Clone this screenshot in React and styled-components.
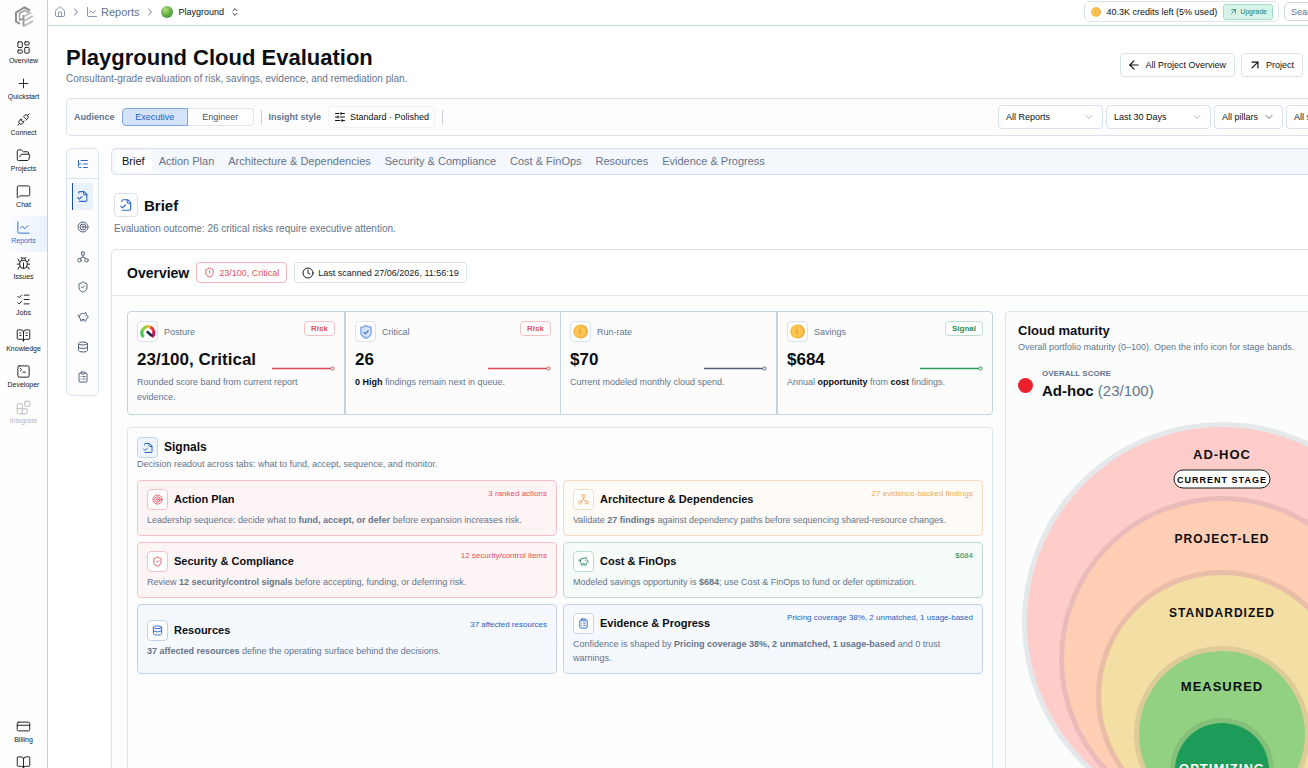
import React from "react";
import styled, { createGlobalStyle, css } from "styled-components";
import {
  ArrowLeft,
  ArrowUpRight,
  Blocks,
  BookOpen,
  BookOpenText,
  Bug,
  ChartLine,
  ChevronDown,
  ChevronRight,
  ChevronsUpDown,
  ClipboardList,
  Clock,
  CreditCard,
  Database,
  FolderOpen,
  House,
  LayoutDashboard,
  ListChecks,
  ListTree,
  MessageSquare,
  PiggyBank,
  Plus,
  ShieldAlert,
  ShieldCheck,
  SlidersHorizontal,
  SquareTerminal,
  Target,
} from "lucide-react";
import { TbPlugConnected } from "react-icons/tb";

const GlobalStyle = createGlobalStyle`
  * {
    box-sizing: border-box;
  }
  body {
    margin: 0;
    overflow-x: hidden;
    background: #ffffff;
    color: #0b0f14;
    font-family: "Liberation Sans", Arial, sans-serif;
    font-size: 9px;
  }
  button, input, select {
    font-family: inherit;
    color: inherit;
  }
  h1, h2, h3, p {
    margin: 0;
  }
  a {
    color: inherit;
    text-decoration: none;
  }
`;

const tones = {
  red: { text: "#e0525c", line: "#f3c0c4", bg: "#fdf5f5" },
  amber: { text: "#efab5c", line: "#f5dcc0", bg: "#fefaf5" },
  green: { text: "#1f8a57", line: "#bcdccf", bg: "#f4fbf9" },
  blue: { text: "#2563c4", line: "#c3d3ea", bg: "#f5f8fd" },
  plain: { text: "#2f6bcb", line: "#d9e2ec", bg: "#ffffff" },
};

/* ---------- drawings ---------- */

const FileCheck = ({ size = 14 }) => (
  <svg width={size} height={size} viewBox="0 0 24 24" fill="none" stroke="currentColor" strokeWidth="2" strokeLinecap="round" strokeLinejoin="round">
    <path d="M5 6V5a2 2 0 0 1 2-2h8l5 5v11a2 2 0 0 1-2 2H6" />
    <path d="M14 3v4a2 2 0 0 0 2 2h4" />
    <path d="m3 14 3 3 5-5" />
  </svg>
);

const Hierarchy = ({ size = 12 }) => (
  <svg width={size} height={size} viewBox="0 0 24 24" fill="none" stroke="currentColor" strokeWidth="2" strokeLinecap="round" strokeLinejoin="round">
    <rect x="9" y="2" width="6" height="6" rx="1" />
    <circle cx="5" cy="18.500" r="3.500" />
    <circle cx="19" cy="18.500" r="3.500" />
    <path d="M12 8v4M6 15l6-3 6 3" />
  </svg>
);

const Logo = () => (
  <svg width="20" height="22" viewBox="0 0 20 22" fill="none">
    <path d="M16 4.500 10.500 1.500 2 6.500V15.500l4 2.500" stroke="#8d8d8d" strokeWidth="2" />
    <path d="M15 6.500 10.500 4.500 5.500 7.500v6" stroke="#a0a0a0" strokeWidth="1.500" />
    <path d="M9.500 9v11.500" stroke="#9b9b9b" strokeWidth="2" />
    <path d="m10 10.500 7-4M10 15l9-5M10 20l9-5" stroke="#bcbcbc" strokeWidth="2" />
    <path d="m5 14.500 4-2" stroke="#9b9b9b" strokeWidth="1.500" />
  </svg>
);

const Coin = ({ size = 15 }) => (
  <svg width={size} height={size} viewBox="0 0 14 14">
    <circle cx="7.500" cy="7" r="6.500" fill="#d9a95a" />
    <circle cx="6.500" cy="7" r="6.300" fill="#f9bd3f" />
    <circle cx="6.500" cy="7" r="4.600" fill="#fbc653" />
    <path d="M6.500 4v6M8 5.500c-.6-.8-3-.8-3 .4s3 .8 3 2-2.400 1.200-3 .4" stroke="#e5a736" strokeWidth=".7" fill="none" />
  </svg>
);

const Gauge = () => (
  <svg width="16" height="16" viewBox="0 0 16 16" fill="none" strokeWidth="3">
    <path d="M3.600 13A6 6 0 0 1 2.500 6" stroke="#3fce4b" />
    <path d="M2.500 6.500A6 6 0 0 1 7 2.600" stroke="#8bd03c" />
    <path d="M6.500 2.700A6 6 0 0 1 11 3.500" stroke="#f4b63a" />
    <path d="M10.500 3.200A6 6 0 0 1 13.700 7.500" stroke="#e23b3b" />
    <path d="M13.600 7A6 6 0 0 1 12 13" stroke="#c2185b" />
    <path d="m7.500 8 4 3.500" stroke="#1b2430" strokeWidth="2.400" strokeLinecap="round" />
  </svg>
);

const BlueShield = () => (
  <svg width="14" height="16" viewBox="0 0 14 16">
    <path d="M7 .8 13 3v5c0 3.500-2.500 6-6 7.200C3.500 14 1 11.500 1 8V3z" fill="#8fb3ee" />
    <path d="M7 2.800 11.300 4.300v3.800c0 2.500-1.800 4.300-4.300 5.200-2.500-.9-4.300-2.700-4.300-5.200V4.300z" fill="#d4e4fb" />
    <path d="m4.800 8 1.700 1.700L9.500 6.500" stroke="#5f7fb8" strokeWidth="1.500" fill="none" />
  </svg>
);

const Spark = ({ color }) => (
  <svg width="64" height="6" viewBox="0 0 64 6" fill="none" stroke={color}>
    <path d="M1 3.500h59" strokeWidth="1.300" />
    <circle cx="61.500" cy="3.500" r="1.600" fill="#fff" />
  </svg>
);

const rings = [
  { label: "AD-HOC", r: 200, fill: "#ffcdc9", y: 37, size: 13 },
  { label: "PROJECT-LED", r: 163, fill: "#ffceb4", y: 121, size: 12 },
  { label: "STANDARDIZED", r: 126, fill: "#f3dea3", y: 195, size: 12 },
  { label: "MEASURED", r: 88, fill: "#92d182", y: 269, size: 13 },
  { label: "OPTIMIZING", r: 52, fill: "#1c9c58", y: 351, size: 13, color: "#ffffff" },
];

const MaturityChart = () => (
  <svg width="400" height="400" viewBox="0 0 400 400" role="img" aria-label="Maturity stages">
    {rings.map((ring) => (
      <g key={ring.label}>
        <circle cx="200" cy={400 - ring.r} r={ring.r - 5} fill={ring.fill} />
        <circle cx="200" cy={400 - ring.r} r={ring.r - 2.5} fill="none" stroke="#0f172a" strokeOpacity=".09" strokeWidth="5" />
      </g>
    ))}
    <rect x="152" y="48" width="96" height="18" rx="9" fill="#ffffff" stroke="#15181c" />
    <RingText x="200" y="61" $size={9}>CURRENT STAGE</RingText>
    {rings.map((ring) => (
      <RingText key={ring.label} x="200" y={ring.y} $size={ring.size} fill={ring.color || "#0b0f14"}>
        {ring.label}
      </RingText>
    ))}
  </svg>
);

/* ---------- data ---------- */

const navItems = [
  { label: "Overview", icon: LayoutDashboard },
  { label: "Quickstart", icon: Plus },
  { label: "Connect", icon: TbPlugConnected },
  { label: "Projects", icon: FolderOpen },
  { label: "Chat", icon: MessageSquare },
  { label: "Reports", icon: ChartLine, active: true },
  { label: "Issues", icon: Bug },
  { label: "Jobs", icon: ListChecks },
  { label: "Knowledge", icon: BookOpenText },
  { label: "Developer", icon: SquareTerminal },
  { label: "Integrate", icon: Blocks, muted: true },
];

const footerItems = [
  { label: "Billing", icon: CreditCard },
  { label: "Docs", icon: BookOpen },
];

const tabs = [
  { label: "Brief", icon: FileCheck },
  { label: "Action Plan", icon: Target },
  { label: "Architecture & Dependencies", icon: Hierarchy },
  { label: "Security & Compliance", icon: ShieldCheck },
  { label: "Cost & FinOps", icon: PiggyBank },
  { label: "Resources", icon: Database },
  { label: "Evidence & Progress", icon: ClipboardList },
];

const filters = [
  { label: "All Reports", width: 105, light: true },
  { label: "Last 30 Days", width: 105, light: true },
  { label: "All pillars", width: 69 },
  { label: "All severities", width: 160 },
];

const kpis = [
  { label: "Posture", icon: <Gauge />, badge: "Risk", tone: "red", value: "23/100, Critical", line: "#dc4a55", text: "Rounded score band from current report evidence." },
  { label: "Critical", icon: <BlueShield />, badge: "Risk", tone: "red", value: "26", line: "#dc4a55", text: <><b>0 High</b> findings remain next in queue.</> },
  { label: "Run-rate", icon: <Coin />, value: "$70", line: "#56627a", text: "Current modeled monthly cloud spend." },
  { label: "Savings", icon: <Coin />, badge: "Signal", tone: "green", value: "$684", line: "#2a9a5c", text: <>Annual <b>opportunity</b> from <b>cost</b> findings.</> },
];

const signals = [
  { title: "Action Plan", icon: Target, tone: "red", meta: "3 ranked actions", text: <>Leadership sequence: decide what to <b>fund, accept, or defer</b> before expansion increases risk.</> },
  { title: "Architecture & Dependencies", icon: Hierarchy, tone: "amber", meta: "27 evidence-backed findings", text: <>Validate <b>27 findings</b> against dependency paths before sequencing shared-resource changes.</> },
  { title: "Security & Compliance", icon: ShieldCheck, tone: "red", meta: "12 security/control items", text: <>Review <b>12 security/control signals</b> before accepting, funding, or deferring risk.</> },
  { title: "Cost & FinOps", icon: PiggyBank, tone: "green", meta: "$684", text: <>Modeled savings opportunity is <b>$684</b>; use Cost &amp; FinOps to fund or defer optimization.</> },
  { title: "Resources", icon: Database, tone: "blue", meta: "37 affected resources", text: <><b>37 affected resources</b> define the operating surface behind the decisions.</> },
  { title: "Evidence & Progress", icon: ClipboardList, tone: "blue", meta: "Pricing coverage 38%, 2 unmatched, 1 usage-based", text: <>Confidence is shaped by <b>Pricing coverage 38%, 2 unmatched, 1 usage-based</b> and 0 trust warnings.</> },
];

/* ---------- page ---------- */

const NavLink = ({ item }) => (
  <NavItem href="#" $active={item.active} $muted={item.muted}>
    <item.icon size={15} strokeWidth={1.5} />
    {item.label}
  </NavItem>
);

const App = () => {
  return (
    <Shell>
      <GlobalStyle />
      <Sidebar>
        <LogoBox><Logo /></LogoBox>
        {navItems.map((item) => <NavLink key={item.label} item={item} />)}
        <NavFooter>
          {footerItems.map((item) => <NavLink key={item.label} item={item} />)}
        </NavFooter>
      </Sidebar>
      <Page>
        <TopBar>
          <Crumbs>
            <a href="#" aria-label="Home"><House size={12} strokeWidth={1.5} /></a>
            <ChevronRight size={12} />
            <Crumb href="#"><ChartLine size={12} strokeWidth={1.5} />Reports</Crumb>
            <ChevronRight size={12} />
          </Crumbs>
          <ProjectSwitch><Orb />Playground<ChevronsUpDown size={10} /></ProjectSwitch>
          <TopRight>
            <Credits>
              <Coin size={10} />
              40.3K credits left (5% used)
              <Upgrade><ArrowUpRight size={9} />Upgrade</Upgrade>
            </Credits>
            <Search type="search" placeholder="Search resources" aria-label="Search" />
          </TopRight>
        </TopBar>

        <Main>
          <Header>
            <div>
              <Title>Playground Cloud Evaluation</Title>
              <Subtitle>Consultant-grade evaluation of risk, savings, evidence, and remediation plan.</Subtitle>
            </div>
            <Actions>
              <Button><ArrowLeft size={14} />All Project Overview</Button>
              <Button><ArrowUpRight size={14} />Project</Button>
              <Button $wide>Share report</Button>
            </Actions>
          </Header>

          <Toolbar>
            <ToolLabel>Audience</ToolLabel>
            <Segments>
              <Segment $on>Executive</Segment>
              <Segment>Engineer</Segment>
            </Segments>
            <Divider />
            <ToolLabel>Insight style</ToolLabel>
            <StyleButton><SlidersHorizontal size={12} />Standard · Polished</StyleButton>
            <Divider />
            <Filters>
              {filters.map((f) => (
                <SelectBox key={f.label} $width={f.width} $light={f.light}>
                  <select aria-label={f.label}><option>{f.label}</option></select>
                  <ChevronDown size={12} strokeWidth={1.5} />
                </SelectBox>
              ))}
            </Filters>
          </Toolbar>

          <Body>
            <Rail>
              <RailTop aria-label="Sections"><ListTree size={12} /></RailTop>
              <RailList>
                {tabs.map((t, i) => (
                  <RailButton key={t.label} aria-label={t.label} $on={i === 0}>
                    <t.icon size={i === 0 ? 13 : 12} />
                  </RailButton>
                ))}
              </RailList>
            </Rail>

            <Content>
              <Tabs>
                {tabs.map((t, i) => <Tab key={t.label} $on={i === 0}>{t.label}</Tab>)}
              </Tabs>
              <Intro>
                <IntroTitle>
                  <IconBox $big $tone="plain"><FileCheck size={14} /></IconBox>
                  <h2>Brief</h2>
                </IntroTitle>
                <p>Evaluation outcome: 26 critical risks require executive attention.</p>
              </Intro>

              <Overview>
                <OverviewHead>
                  <h2>Overview</h2>
                  <Chip $danger><ShieldAlert size={11} />23/100, Critical</Chip>
                  <Chip><Clock size={12} />Last scanned 27/06/2026, 11:56:19</Chip>
                </OverviewHead>
                <OverviewGrid>
                  <Column>
                    <KpiGrid>
                      {kpis.map((k) => (
                        <Kpi key={k.label}>
                          <KpiHead>
                            <IconBox $tone="plain">{k.icon}</IconBox>
                            <span>{k.label}</span>
                            {k.badge && <Badge $tone={k.tone}>{k.badge}</Badge>}
                          </KpiHead>
                          <KpiValue><strong>{k.value}</strong><Spark color={k.line} /></KpiValue>
                          <KpiText>{k.text}</KpiText>
                        </Kpi>
                      ))}
                    </KpiGrid>

                    <Signals>
                      <SignalsHead>
                        <IconBox $tinted $tone="blue"><FileCheck size={12} /></IconBox>
                        <h3>Signals</h3>
                      </SignalsHead>
                      <SmallText>Decision readout across tabs: what to fund, accept, sequence, and monitor.</SmallText>
                      <SignalGrid>
                        {signals.map((s) => (
                          <SignalCard key={s.title} $tone={s.tone}>
                            <SignalTop>
                              <IconBox $tone={s.tone}><s.icon size={11} /></IconBox>
                              <h3>{s.title}</h3>
                              <Meta $tone={s.tone}>{s.meta}</Meta>
                            </SignalTop>
                            <SignalText>{s.text}</SignalText>
                          </SignalCard>
                        ))}
                      </SignalGrid>
                    </Signals>
                  </Column>

                  <Maturity>
                    <h3>Cloud maturity</h3>
                    <SmallText $tall>Overall portfolio maturity (0–100). Open the info icon for stage bands.</SmallText>
                    <Score>
                      <Dot />
                      <div>
                        <ScoreLabel>OVERALL SCORE</ScoreLabel>
                        <ScoreValue><b>Ad-hoc</b> (23/100)</ScoreValue>
                      </div>
                    </Score>
                    <ChartBox><MaturityChart /></ChartBox>
                  </Maturity>
                </OverviewGrid>
              </Overview>
            </Content>
          </Body>
        </Main>
      </Page>
    </Shell>
  );
};

export default App;

const Shell = styled.div`
  display: flex;
  min-width: 1472px;
  height: 100vh;
  overflow: hidden;
`;
const Sidebar = styled.nav`
  display: flex;
  flex-direction: column;
  flex: 0 0 48px;
  border-right: 1px solid #bfd0e0;
  background: #fefefe;
`;
const LogoBox = styled.div`
  display: flex;
  justify-content: center;
  padding: 6px 0 8px;
`;
const NavItem = styled.a`
  display: flex;
  flex-direction: column;
  align-items: center;
  flex: none;
  gap: 1px;
  height: 36px;
  padding-top: 4px;
  font-size: 7px;
  line-height: 10px;
  color: #15181c;
  ${(p) => p.$active && css`
    color: #2f6bcb;
    background: linear-gradient(90deg, #ffffff, #eaf2fd);
  `}
  ${(p) => p.$muted && css`
    color: #b4b9c0;
  `}
`;
const NavFooter = styled.div`
  height: 53px;
  margin-top: auto;
  overflow: hidden;
`;
const Page = styled.div`
  display: flex;
  flex-direction: column;
  flex: 1;
  min-width: 0;
`;
const TopBar = styled.header`
  display: flex;
  align-items: center;
  flex: none;
  height: 26px;
  padding: 0 6px 2px;
  border-bottom: 1px solid #c3d5e4;
`;
const Crumbs = styled.div`
  display: flex;
  align-items: center;
  gap: 4px;
  color: #64748b;
  a {
    display: flex;
  }
`;
const Crumb = styled.a`
  align-items: center;
  gap: 3px;
  font-size: 11px;
`;
const ProjectSwitch = styled.button`
  display: flex;
  align-items: center;
  gap: 6px;
  margin-left: 5px;
  padding: 0;
  border: none;
  background: none;
  font-size: 9px;
`;
const Orb = styled.span`
  width: 12px;
  height: 12px;
  border-radius: 50%;
  background: radial-gradient(circle at 35% 30%, #b6de7c, #5aa944 55%, #3c8a4a);
`;
const TopRight = styled.div`
  display: flex;
  align-items: center;
  gap: 5px;
  margin-left: auto;
`;
const Credits = styled.div`
  display: flex;
  align-items: center;
  gap: 6px;
  height: 21px;
  padding: 0 5px 0 6px;
  border: 1px solid #dce3eb;
  border-radius: 5px;
`;
const Upgrade = styled.button`
  display: flex;
  align-items: center;
  gap: 2px;
  height: 16px;
  padding: 0 5px;
  border: 1px solid #a5dbc7;
  border-radius: 3px;
  background: #d5f3e8;
  color: #1f7d5c;
  font-size: 7px;
`;
const Search = styled.input`
  width: 182px;
  height: 19px;
  padding: 0 6px;
  border: 1px solid #d0d9e3;
  border-radius: 5px;
  font-size: 9px;
  &::placeholder {
    color: #64748b;
  }
`;
const Main = styled.main`
  display: flex;
  flex-direction: column;
  flex: 1;
  min-height: 0;
  padding: 18px 18px 0;
  overflow-y: auto;
  scrollbar-width: none;
`;
const Header = styled.div`
  display: flex;
  align-items: center;
  justify-content: space-between;
  flex: none;
  height: 54px;
  padding-bottom: 12px;
`;
const Title = styled.h1`
  font-size: 22px;
  line-height: 27px;
`;
const Subtitle = styled.p`
  font-size: 10px;
  line-height: 16px;
  color: #64748b;
`;
const Actions = styled.div`
  display: flex;
  gap: 6px;
`;
const Button = styled.button`
  display: flex;
  align-items: center;
  justify-content: center;
  gap: 4px;
  height: 24px;
  padding: 0 8px 0 6px;
  border: 1px solid #d9e1ea;
  border-radius: 4px;
  background: #ffffff;
  font-size: 9px;
  ${(p) => p.$wide && css`
    width: 145px;
  `}
`;
const Toolbar = styled.div`
  display: flex;
  align-items: center;
  flex: none;
  gap: 7px;
  height: 38px;
  padding: 0 7px;
  border: 1px solid #dae3ee;
  border-radius: 5px;
  background: #fdfdfe;
`;
const ToolLabel = styled.span`
  font-weight: bold;
  color: #64748b;
`;
const Segments = styled.div`
  display: flex;
  width: 132px;
  height: 18px;
`;
const Segment = styled.button`
  flex: 1;
  padding: 0;
  border: 1px solid #dbe3ec;
  border-left: none;
  border-radius: 0 4px 4px 0;
  background: #ffffff;
  font-size: 9px;
  color: #475569;
  ${(p) => p.$on && css`
    border: 1px solid #7fa6e3;
    border-radius: 4px 0 0 4px;
    background: #d5e3f8;
    color: #2563c4;
  `}
`;
const Divider = styled.span`
  width: 1px;
  height: 15px;
  background: #cbd5e1;
`;
const StyleButton = styled.button`
  display: flex;
  align-items: center;
  gap: 4px;
  height: 22px;
  padding: 0 5px;
  border: 1px solid #eef1f5;
  border-radius: 4px;
  background: #ffffff;
  font-size: 9px;
`;
const Filters = styled.div`
  display: flex;
  gap: 3px;
  margin-left: auto;
`;
const SelectBox = styled.label`
  display: grid;
  align-items: center;
  width: ${(p) => p.$width}px;
  height: 24px;
  select, svg {
    grid-area: 1 / 1;
  }
  select {
    width: 100%;
    height: 100%;
    padding: 0 7px;
    border: 1px solid #d9e1ea;
    border-radius: 4px;
    background: #ffffff;
    font-size: 9px;
    appearance: none;
  }
  svg {
    justify-self: end;
    margin-right: 8px;
    color: ${(p) => (p.$light ? "#94a3b8" : "#334155")};
    pointer-events: none;
  }
`;
const Body = styled.div`
  display: flex;
  align-items: flex-start;
  flex: none;
  gap: 12px;
  margin-top: 12px;
`;
const Rail = styled.aside`
  flex: 0 0 33px;
  border: 1px solid #d9e2ee;
  border-radius: 5px;
  background: #fdfdfe;
`;
const RailTop = styled.button`
  display: flex;
  align-items: center;
  justify-content: center;
  width: 100%;
  height: 30px;
  padding: 0;
  border: none;
  border-bottom: 1px solid #dae3ee;
  background: none;
  color: #2f6bcb;
`;
const RailList = styled.div`
  display: flex;
  flex-direction: column;
  align-items: center;
  gap: 3px;
  padding: 4px 0 5px;
`;
const RailButton = styled.button`
  display: flex;
  align-items: center;
  justify-content: center;
  width: 21px;
  height: 27px;
  padding: 0;
  border: none;
  border-radius: 4px;
  background: none;
  color: #56627a;
  ${(p) => p.$on && css`
    border-radius: 0 4px 4px 0;
    background: #e9f1fc;
    box-shadow: inset 1px 0 0 #1f4f9c;
    color: #2f6bcb;
  `}
`;
const Content = styled.div`
  flex: 1;
  min-width: 0;
`;
const Tabs = styled.div`
  display: flex;
  height: 27px;
  padding: 2px 3px;
  border: 1px solid #d5e0ec;
  border-radius: 5px;
  background: #f4f7fb;
`;
const Tab = styled.button`
  padding: 0 7px 1px;
  border: none;
  border-radius: 4px;
  background: ${(p) => (p.$on ? "#ffffff" : "none")};
  font-size: 11px;
  color: ${(p) => (p.$on ? "#0b0f14" : "#64748b")};
`;
const Intro = styled.section`
  padding: 18px 3px 13px;
  p {
    margin-top: 4px;
    font-size: 10px;
    line-height: 15px;
    color: #64748b;
  }
`;
const IntroTitle = styled.div`
  display: flex;
  align-items: center;
  gap: 6px;
  h2 {
    font-size: 15px;
  }
`;
const IconBox = styled.span`
  display: flex;
  align-items: center;
  justify-content: center;
  flex: none;
  width: ${(p) => (p.$big ? 24 : 21)}px;
  height: ${(p) => (p.$big ? 24 : 21)}px;
  border: 1px solid ${(p) => tones[p.$tone].line};
  border-radius: 4px;
  background: ${(p) => (p.$tinted ? "#eef5fe" : "#ffffff")};
  color: ${(p) => tones[p.$tone].text};
`;
const Overview = styled.section`
  border: 1px solid #dae3ee;
  border-radius: 5px;
  background: #fcfdfd;
`;
const OverviewHead = styled.div`
  display: flex;
  align-items: center;
  gap: 7px;
  height: 46px;
  padding: 0 15px;
  border-bottom: 1px solid #dde5ee;
  border-radius: 5px 5px 0 0;
  background: #ffffff;
  h2 {
    font-size: 14px;
  }
`;
const Chip = styled.span`
  display: flex;
  align-items: center;
  gap: 4px;
  height: 21px;
  padding: 0 7px;
  border: 1px solid ${(p) => (p.$danger ? "#f2b4b9" : "#d9e1ea")};
  border-radius: 4px;
  background: #ffffff;
  color: ${(p) => (p.$danger ? "#e0525c" : "#15181c")};
`;
const OverviewGrid = styled.div`
  display: grid;
  grid-template-columns: 2fr 1fr;
  gap: 12px;
  padding: 15px;
`;
const Column = styled.div`
  display: flex;
  flex-direction: column;
  gap: 12px;
  min-width: 0;
`;
const KpiGrid = styled.div`
  display: grid;
  grid-template-columns: repeat(4, 1fr);
  border: 1px solid #c3d3e0;
  border-radius: 4px;
  background: #fcfcfd;
`;
const Kpi = styled.article`
  height: 102px;
  padding: 9px;
  border-left: 1px solid #c3d3e0;
  &:first-child {
    border-left: none;
  }
  &:nth-child(even) {
    border-left-width: 2px;
  }
`;
const KpiHead = styled.div`
  display: flex;
  align-items: center;
  gap: 6px;
  color: #64748b;
`;
const Badge = styled.span`
  align-self: flex-start;
  height: 15px;
  margin-left: auto;
  padding: 0 6px;
  border: 1px solid ${(p) => tones[p.$tone].line};
  border-radius: 4px;
  background: #ffffff;
  color: ${(p) => tones[p.$tone].text};
  font-size: 8px;
  font-weight: bold;
  line-height: 13px;
`;
const KpiValue = styled.div`
  display: flex;
  align-items: flex-end;
  justify-content: space-between;
  height: 29px;
  strong {
    font-size: 17px;
    line-height: 22px;
  }
`;
const KpiText = styled.p`
  margin-top: 4px;
  line-height: 15px;
  color: #64748b;
  b {
    color: #0b0f14;
  }
`;
const Signals = styled.section`
  flex: 1;
  padding: 9px;
  border: 1px solid #dbe4ee;
  border-radius: 4px;
  background: #fdfdfe;
`;
const SignalsHead = styled.div`
  display: flex;
  align-items: center;
  gap: 6px;
  h3 {
    padding-bottom: 2px;
    font-size: 12px;
  }
`;
const SmallText = styled.p`
  line-height: ${(p) => (p.$tall ? 16 : 12)}px;
  color: #64748b;
`;
const SignalGrid = styled.div`
  display: grid;
  grid-template-columns: 1fr 1fr;
  gap: 6px;
  margin-top: 10px;
`;
const SignalCard = styled.article`
  display: flex;
  flex-direction: column;
  justify-content: center;
  gap: 3px;
  padding: 8px 9px;
  border: 1px solid ${(p) => tones[p.$tone].line};
  border-radius: 4px;
  background: ${(p) => tones[p.$tone].bg};
`;
const SignalTop = styled.div`
  display: flex;
  align-items: center;
  gap: 6px;
  h3 {
    padding-bottom: 2px;
    font-size: 11px;
  }
`;
const Meta = styled.span`
  align-self: flex-start;
  margin-left: auto;
  font-size: 8px;
  color: ${(p) => tones[p.$tone].text};
`;
const SignalText = styled.p`
  line-height: 14px;
  color: #64748b;
`;
const Maturity = styled.section`
  min-width: 0;
  padding: 11px 12px;
  border: 1px solid #dbe6ec;
  border-radius: 4px;
  background: #fbfdfd;
  h3 {
    font-size: 13px;
    line-height: 16px;
  }
`;
const Score = styled.div`
  display: flex;
  align-items: center;
  gap: 9px;
  margin-top: 13px;
`;
const Dot = styled.span`
  width: 15px;
  height: 15px;
  border-radius: 50%;
  background: #ea202c;
`;
const ScoreLabel = styled.p`
  font-size: 8px;
  font-weight: bold;
  line-height: 12px;
  color: #64748b;
`;
const ScoreValue = styled.p`
  font-size: 15px;
  line-height: 22px;
  color: #64748b;
  b {
    color: #0b0f14;
  }
`;
const ChartBox = styled.div`
  display: flex;
  justify-content: center;
  margin-top: 20px;
`;
const RingText = styled.text`
  font-size: ${(p) => p.$size}px;
  font-weight: bold;
  letter-spacing: 1px;
  text-anchor: middle;
`;
